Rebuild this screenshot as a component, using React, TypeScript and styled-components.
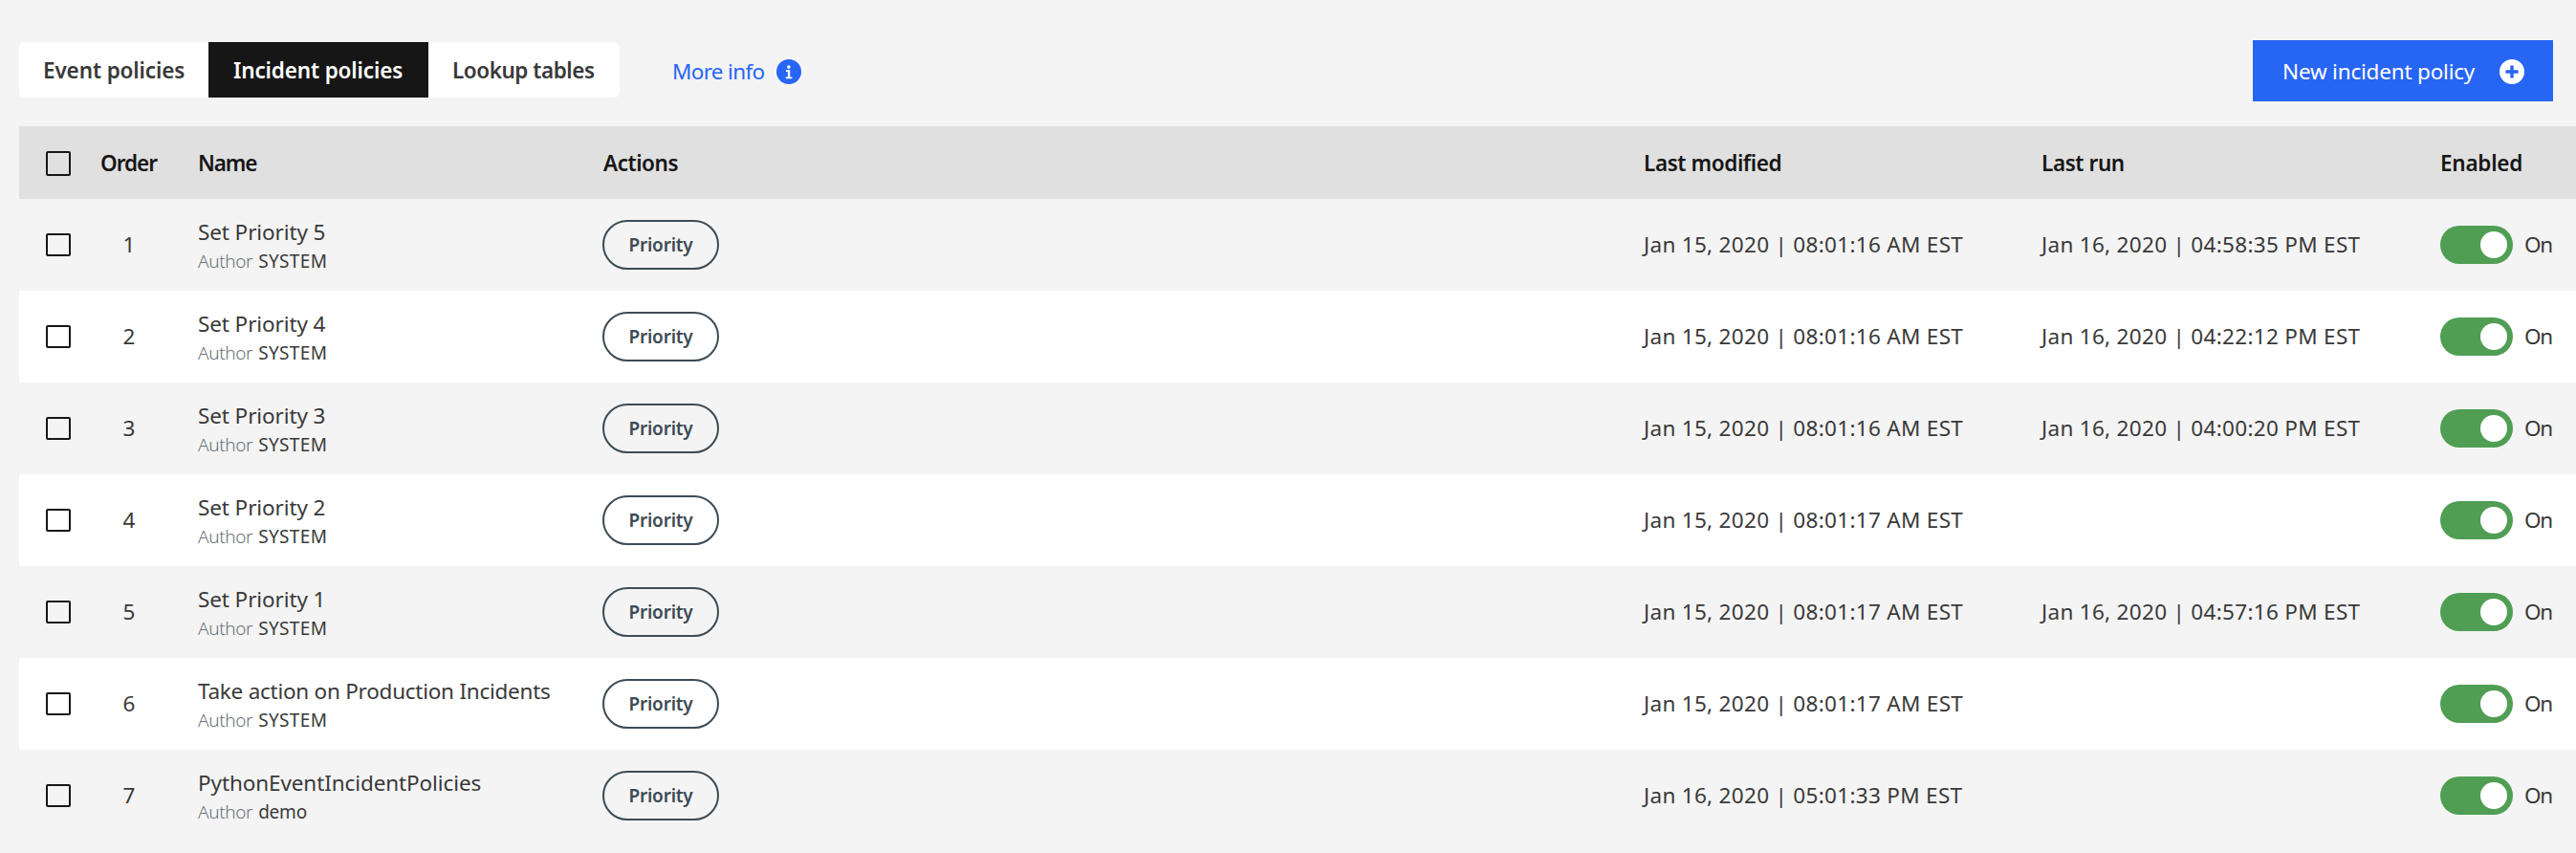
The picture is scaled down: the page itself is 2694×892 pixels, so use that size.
import React from "react";
import styled, { createGlobalStyle } from "styled-components";

const GlobalStyle = createGlobalStyle`
  *, *::before, *::after { box-sizing: border-box; }
  body {
    margin: 0;
    background: #f4f4f4;
    color: #393939;
    font-family: "Noto Sans", "Open Sans", sans-serif;
    font-size: 22.5px;
    line-height: 30px;
    overflow: hidden;
  }
  button { font: inherit; border: 0; margin: 0; cursor: pointer; }
`;

const Page = styled.main`
  width: 100%;
  height: 892px;
  padding-left: 20px;
`;

const Toolbar = styled.header`
  display: flex;
  align-items: center;
  height: 132px;
  padding: 16px 24px 0 0;
`;

const Tabs = styled.nav`
  display: flex;
  height: 58px;
  margin-bottom: 2px;
  background: #fff;
  border-radius: 6px;
  overflow: hidden;
`;

const Tab = styled.button<{ $active?: boolean; $width: number; $tracking: number }>`
  width: ${(p) => p.$width}px;
  padding: 2px 0 0 ${(p) => (p.$active ? 26 : 25)}px;
  text-align: left;
  white-space: nowrap;
  font-weight: 600;
  letter-spacing: ${(p) => p.$tracking}px;
  color: ${(p) => (p.$active ? "#fff" : "#393939")};
  background: ${(p) => (p.$active ? "#161616" : "transparent")};
`;

const MoreInfo = styled.a`
  display: flex;
  align-items: center;
  justify-content: space-between;
  width: 135px;
  margin: 2px 0 0 55px;
  color: #2765f5;
  letter-spacing: -0.67px;
  white-space: nowrap;
`;

const NewPolicyButton = styled.button`
  display: flex;
  align-items: center;
  justify-content: space-between;
  width: 314px;
  height: 64px;
  margin-left: auto;
  padding: 2px 30px 0 31px;
  color: #fff;
  background: #2765f5;
  letter-spacing: -0.2px;
  white-space: nowrap;
`;

const Icon = styled.svg`
  display: block;
  flex: none;
  width: 26px;
  height: 26px;
`;

const Row = styled.div`
  display: grid;
  grid-template-columns: 84px 62px 464px 1088px 416px 418px 1fr;
  align-items: center;
  height: 96px;
  white-space: nowrap;
  &:nth-child(odd) { background: #fff; }
`;

const HeadRow = styled(Row)`
  height: 76px;
  color: #161616;
  font-weight: 600;
  &:nth-child(odd) { background: #e0e0e0; }
`;

const HeadLabel = styled.span<{ $tracking: number; $indent?: number }>`
  padding-top: 1px;
  padding-left: ${(p) => p.$indent ?? 0}px;
  letter-spacing: ${(p) => p.$tracking}px;
`;

const Checkbox = styled.span<{ $tall?: boolean }>`
  width: 26px;
  height: ${(p) => (p.$tall ? 26 : 24)}px;
  margin-left: 28px;
  margin-top: ${(p) => (p.$tall ? 2 : 0)}px;
  border: 2px solid #161616;
  border-radius: 2px;
`;

const Order = styled.span`
  text-align: center;
`;

const NameCell = styled.div`
  padding: 6px 0 0 41px;
`;

const PolicyName = styled.div<{ $tracking: number }>`
  line-height: 28px;
  letter-spacing: ${(p) => p.$tracking}px;
`;

const Author = styled.div`
  display: flex;
  gap: 6px;
  font-size: 19px;
  line-height: 32px;
`;

const AuthorLabel = styled.span`
  color: #697077;
  font-weight: 300;
  letter-spacing: -0.37px;
`;

const AuthorName = styled.span<{ $tracking: number }>`
  letter-spacing: ${(p) => p.$tracking}px;
`;

const Pill = styled.span`
  display: flex;
  align-items: center;
  justify-content: center;
  width: 122px;
  height: 52px;
  border: 2px solid #3d4b54;
  border-radius: 26px;
  color: #3d4b54;
  font-size: 19px;
  font-weight: 600;
  letter-spacing: -0.2px;
  padding-bottom: 1px;
`;

const DateText = styled.span`
  padding-left: 1px;
  letter-spacing: 0.31px;
`;

const Enabled = styled.div`
  display: flex;
  align-items: center;
  gap: 12px;
`;

const Toggle = styled.span`
  display: flex;
  align-items: center;
  justify-content: flex-end;
  width: 76px;
  height: 40px;
  padding-right: 6px;
  border-radius: 20px;
  background: #509e54;
  &::after {
    content: "";
    width: 28px;
    height: 28px;
    border-radius: 50%;
    background: #fff;
  }
`;

const ToggleLabel = styled.span`
  letter-spacing: -1.4px;
`;

interface Policy {
  name: string;
  tracking: number;
  author: string;
  modified: string;
  lastRun?: string;
}

const policies: Policy[] = [
  { name: "Set Priority 5", tracking: -0.1, author: "SYSTEM", modified: "Jan 15, 2020 | 08:01:16 AM EST", lastRun: "Jan 16, 2020 | 04:58:35 PM EST" },
  { name: "Set Priority 4", tracking: -0.1, author: "SYSTEM", modified: "Jan 15, 2020 | 08:01:16 AM EST", lastRun: "Jan 16, 2020 | 04:22:12 PM EST" },
  { name: "Set Priority 3", tracking: -0.1, author: "SYSTEM", modified: "Jan 15, 2020 | 08:01:16 AM EST", lastRun: "Jan 16, 2020 | 04:00:20 PM EST" },
  { name: "Set Priority 2", tracking: -0.1, author: "SYSTEM", modified: "Jan 15, 2020 | 08:01:17 AM EST" },
  { name: "Set Priority 1", tracking: -0.1, author: "SYSTEM", modified: "Jan 15, 2020 | 08:01:17 AM EST", lastRun: "Jan 16, 2020 | 04:57:16 PM EST" },
  { name: "Take action on Production Incidents", tracking: -0.25, author: "SYSTEM", modified: "Jan 15, 2020 | 08:01:17 AM EST" },
  { name: "PythonEventIncidentPolicies", tracking: -0.1, author: "demo", modified: "Jan 16, 2020 | 05:01:33 PM EST" },
];

const InfoIcon = () => (
  <Icon viewBox="0 0 26 26">
    <circle cx="13" cy="13" r="13" fill="#2765f5" />
    <circle cx="12.9" cy="8.1" r="1.8" fill="#fff" />
    <path d="M10 11.1h4.2v7.3h2.3v1.9H9.8v-1.9h2.1V13H10z" fill="#fff" />
  </Icon>
);

const AddIcon = () => (
  <Icon viewBox="0 0 26 26">
    <circle cx="13" cy="13" r="13" fill="#fff" />
    <path d="M11.3 6.4h3.4v4.9h4.9v3.4h-4.9v4.9h-3.4v-4.9H6.4v-3.4h4.9z" fill="#2765f5" />
  </Icon>
);

export default function App() {
  return (
    <Page>
      <GlobalStyle />
      <Toolbar>
        <Tabs>
          <Tab $width={198} $tracking={-0.12}>Event policies</Tab>
          <Tab $active $width={230} $tracking={-0.14}>Incident policies</Tab>
          <Tab $width={200} $tracking={-0.46}>Lookup tables</Tab>
        </Tabs>
        <MoreInfo>
          More info
          <InfoIcon />
        </MoreInfo>
        <NewPolicyButton>
          New incident policy
          <AddIcon />
        </NewPolicyButton>
      </Toolbar>
      <section>
        <HeadRow>
          <Checkbox $tall />
          <HeadLabel $tracking={-1} $indent={1}>Order</HeadLabel>
          <HeadLabel $tracking={-1.1} $indent={41}>Name</HeadLabel>
          <HeadLabel $tracking={-0.45} $indent={1}>Actions</HeadLabel>
          <HeadLabel $tracking={-0.4} $indent={1}>Last modified</HeadLabel>
          <HeadLabel $tracking={-0.4} $indent={1}>Last run</HeadLabel>
          <HeadLabel $tracking={-0.25}>Enabled</HeadLabel>
        </HeadRow>
        {policies.map((p, i) => (
          <Row key={p.name}>
            <Checkbox />
            <Order>{i + 1}</Order>
            <NameCell>
              <PolicyName $tracking={p.tracking}>{p.name}</PolicyName>
              <Author>
                <AuthorLabel>Author</AuthorLabel>
                <AuthorName $tracking={p.author === "demo" ? -0.22 : 0.35}>{p.author}</AuthorName>
              </Author>
            </NameCell>
            <Pill>Priority</Pill>
            <DateText>{p.modified}</DateText>
            <DateText>{p.lastRun}</DateText>
            <Enabled>
              <Toggle />
              <ToggleLabel>On</ToggleLabel>
            </Enabled>
          </Row>
        ))}
      </section>
    </Page>
  );
}
